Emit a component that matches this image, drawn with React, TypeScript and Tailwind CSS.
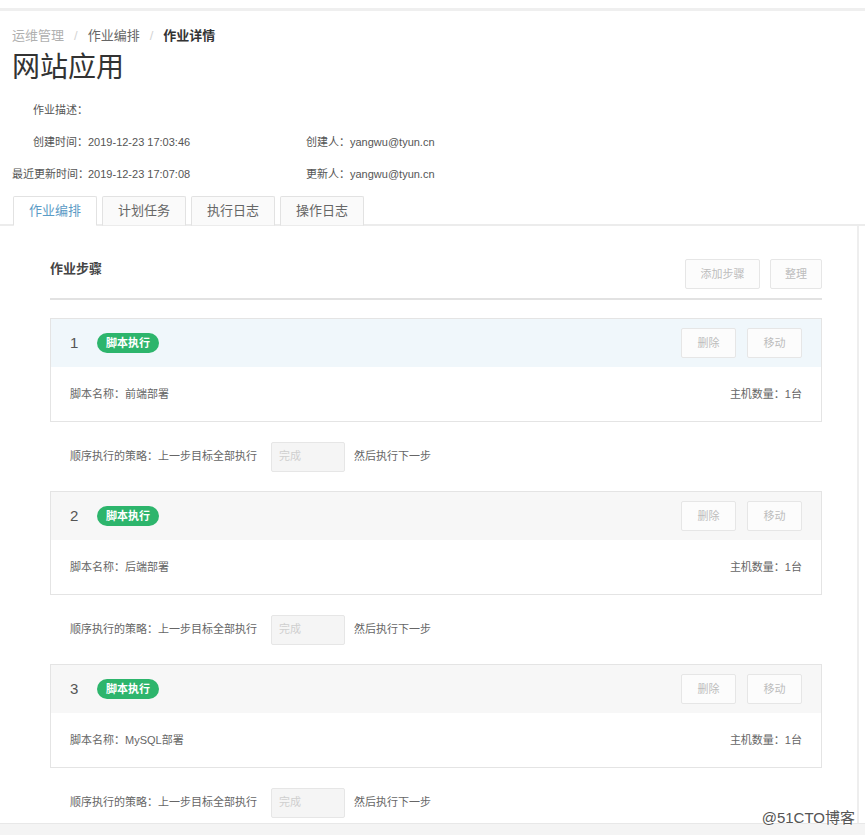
import React from 'react';

const steps = [
  { no: 1, name: '前端部署', active: true },
  { no: 2, name: '后端部署', active: false },
  { no: 3, name: 'MySQL部署', active: false },
];

const tabs = ['作业编排', '计划任务', '执行日志', '操作日志'];

const GhostButton: React.FC<{ label: string; className?: string }> = ({ label, className }) => (
  <button
    className={`h-[30px] border border-[#e6e6e6] bg-[#fcfcfc] rounded-[2px] text-[11px] text-[#bdbdbd] ${className ?? ''}`}
  >
    {label}
  </button>
);

export default function App() {
  return (
    <div
      className="relative w-[865px] h-[835px] bg-white overflow-hidden text-[#555]"
      style={{ fontFamily: '"Liberation Sans", "Noto Sans CJK SC", sans-serif' }}
    >
      {/* top strip */}
      <div className="h-[8px]" />
      <div className="h-[3px] bg-[#efefef]" />

      {/* page header */}
      <div className="px-[12px] pt-[15px]">
        <div className="flex items-center text-[13px] leading-[20px]">
          <span className="text-[#b0b0b0]">运维管理</span>
          <span className="mx-[10px] text-[#d5d5d5]">/</span>
          <span className="text-[#666]">作业编排</span>
          <span className="mx-[10px] text-[#d5d5d5]">/</span>
          <span className="text-[#333] font-bold">作业详情</span>
        </div>
        <h1 className="mt-[4px] text-[28px] leading-[36px] text-[#333]">网站应用</h1>

        <div className="mt-[8px] text-[11px] text-[#555] whitespace-nowrap">
          <div className="flex items-center h-[32px]">
            <span className="w-[76px] text-right">作业描述：</span>
          </div>
          <div className="flex items-center h-[32px]">
            <div className="w-[294px] flex">
              <span className="w-[76px] text-right">创建时间：</span>
              <span>2019-12-23 17:03:46</span>
            </div>
            <span>创建人：yangwu@tyun.cn</span>
          </div>
          <div className="flex items-center h-[32px]">
            <div className="w-[294px] flex">
              <span className="w-[76px] text-right">最近更新时间：</span>
              <span>2019-12-23 17:07:08</span>
            </div>
            <span>更新人：yangwu@tyun.cn</span>
          </div>
        </div>
      </div>

      {/* tabs */}
      <div className="mt-[6px] flex gap-[5px] pl-[13px] border-b-2 border-[#ececec]">
        {tabs.map((t, i) => (
          <div
            key={t}
            className={`w-[84px] h-[30px] -mb-[2px] flex items-center justify-center text-[13px] border border-[#e2e2e2] rounded-t-[2px] ${
              i === 0
                ? 'bg-white border-b-white text-[#5b9bc6]'
                : 'bg-[#fafafa] border-b-[#ececec] text-[#666]'
            }`}
          >
            {t}
          </div>
        ))}
      </div>

      {/* panel */}
      <div className="w-[859px] h-[597px] overflow-hidden border-r-2 border-[#eeeeee] pl-[50px] pr-[35px] pt-[33px]">
        <div className="flex items-start justify-between">
          <span className="text-[13px] leading-[20px] font-bold text-[#444]">作业步骤</span>
          <div className="flex gap-[10px]">
            <GhostButton label="添加步骤" className="w-[75px] h-[29px]" />
            <GhostButton label="整理" className="w-[52px] h-[29px]" />
          </div>
        </div>
        <div className="mt-[9px] h-[2px] bg-[#e2e2e2]" />

        <div className="mt-[18px]">
          {steps.map((s) => (
            <div key={s.no}>
              <div className="border border-[#e4e4e4]">
                <div
                  className={`h-[48px] flex items-center justify-between px-[19px] ${
                    s.active ? 'bg-[#f0f7fb]' : 'bg-[#f7f7f7]'
                  }`}
                >
                  <div className="flex items-center">
                    <span className="text-[15px] text-[#555] w-[27px]">{s.no}</span>
                    <span className="h-[20px] px-[9px] rounded-full bg-[#2db56c] text-white text-[11px] leading-[20px] font-bold">
                      脚本执行
                    </span>
                  </div>
                  <div className="flex gap-[11px]">
                    <GhostButton label="删除" className="w-[55px]" />
                    <GhostButton label="移动" className="w-[55px]" />
                  </div>
                </div>
                <div className="h-[54px] bg-white flex items-center justify-between px-[19px] text-[11px] text-[#666]">
                  <span>脚本名称：{s.name}</span>
                  <span>主机数量：1台</span>
                </div>
              </div>

              <div className="h-[69px] flex items-center pl-[20px] text-[11px] text-[#666]">
                <span>顺序执行的策略：上一步目标全部执行</span>
                <div className="ml-[14px] w-[74px] h-[30px] bg-[#f5f5f5] border border-[#e6e6e6] rounded-[2px] flex items-center px-[7px] text-[#cfcfcf]">
                  完成
                </div>
                <span className="ml-[9px]">然后执行下一步</span>
              </div>
            </div>
          ))}
        </div>
      </div>

      {/* bottom strip */}
      <div className="h-[13px] bg-[#f4f4f4] border-t border-[#e8e8e8]" />

      {/* watermark */}
      <div
        className="absolute right-[10px] bottom-[8px] text-[15px] leading-[18px] text-[#555]"
        style={{ textShadow: '0 0 2px #fff, 0 0 2px #fff' }}
      >
        @51CTO博客
      </div>
    </div>
  );
}
